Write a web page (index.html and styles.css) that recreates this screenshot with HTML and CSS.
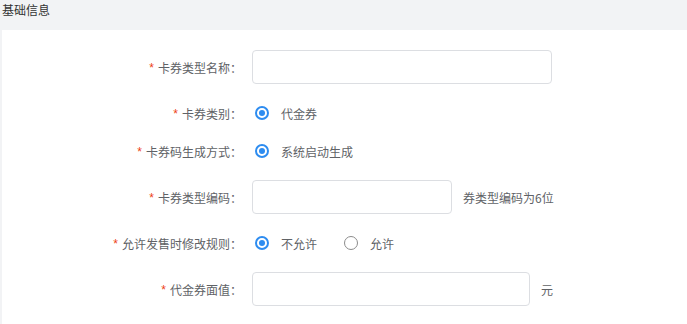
FILE: index.html
```html
<!DOCTYPE html>
<html lang="zh-CN">
<head>
  <meta charset="UTF-8">
  <meta name="viewport" content="width=device-width, initial-scale=1.0">
  <title>基础信息</title>
  <link rel="stylesheet" href="styles.css">
</head>
<body>
  <div class="section-title">基础信息</div>
  <div class="panel">
    <form class="form">
      <div class="form-item">
        <label class="form-label"><span class="req">*</span>卡券类型名称：</label>
        <div class="form-content">
          <input class="input" type="text" style="width: 300px">
        </div>
      </div>

      <div class="form-item radio-row">
        <label class="form-label"><span class="req">*</span>卡券类别：</label>
        <div class="form-content">
          <span class="radio checked"><span class="dot"></span>代金券</span>
        </div>
      </div>

      <div class="form-item radio-row">
        <label class="form-label"><span class="req">*</span>卡券码生成方式：</label>
        <div class="form-content">
          <span class="radio checked"><span class="dot"></span>系统启动生成</span>
        </div>
      </div>

      <div class="form-item">
        <label class="form-label"><span class="req">*</span>卡券类型编码：</label>
        <div class="form-content">
          <input class="input" type="text" style="width: 200px">
          <span class="hint">券类型编码为6位</span>
        </div>
      </div>

      <div class="form-item radio-row">
        <label class="form-label"><span class="req">*</span>允许发售时修改规则：</label>
        <div class="form-content">
          <span class="radio checked"><span class="dot"></span>不允许</span>
          <span class="radio"><span class="dot"></span>允许</span>
        </div>
      </div>

      <div class="form-item">
        <label class="form-label"><span class="req">*</span>代金券面值：</label>
        <div class="form-content">
          <input class="input" type="text" style="width: 278px">
          <span class="hint">元</span>
        </div>
      </div>
    </form>
  </div>
</body>
</html>
```

FILE: styles.css
```css
html, body {
  height: 100%;
}

body {
  margin: 0;
  font-family: "Noto Sans CJK SC", "Noto Sans", sans-serif;
  font-size: 12px;
  color: #515a6e;
  background-color: #f2f3f5;
  display: flex;
  flex-direction: column;
  overflow: hidden;
}

.section-title {
  flex-shrink: 0;
  height: 30px;
  box-sizing: border-box;
  padding: 2px 2px 0;
  line-height: 16px;
  color: #333;
}

.panel {
  flex: 1 0 auto;
  margin-left: 2px;
  background: #fff;
  padding-top: 20px;
}

.form-item {
  display: flex;
  align-items: center;
  height: 34px;
  margin-bottom: 20px;
}

.radio-row {
  height: 18px;
}

.form-label {
  width: 250px;
  box-sizing: border-box;
  padding-right: 10px;
  text-align: right;
  color: #606266;
}

.req {
  color: #ed4014;
  margin-right: 4px;
  font-family: "Liberation Sans", sans-serif;
  position: relative;
  top: -1px;
}

.form-content {
  display: flex;
  align-items: center;
}

.input {
  height: 34px;
  box-sizing: border-box;
  border: 1px solid #dcdee2;
  border-radius: 4px;
  padding: 4px 7px;
  outline: none;
  font-family: inherit;
  font-size: 12px;
}

.hint {
  margin-left: 11px;
  color: #606266;
}

.radio {
  display: flex;
  align-items: center;
  margin-left: 3px;
  margin-right: 24px;
  color: #606266;
}

.dot {
  width: 14px;
  height: 14px;
  box-sizing: border-box;
  border: 1px solid #8c8c8c;
  border-radius: 50%;
  margin-right: 12px;
  position: relative;
}

.radio.checked .dot {
  border: 2px solid #2d8cf0;
}

.radio.checked .dot::after {
  content: "";
  position: absolute;
  left: 2px;
  top: 2px;
  width: 6px;
  height: 6px;
  border-radius: 50%;
  background: #2d8cf0;
}
```
